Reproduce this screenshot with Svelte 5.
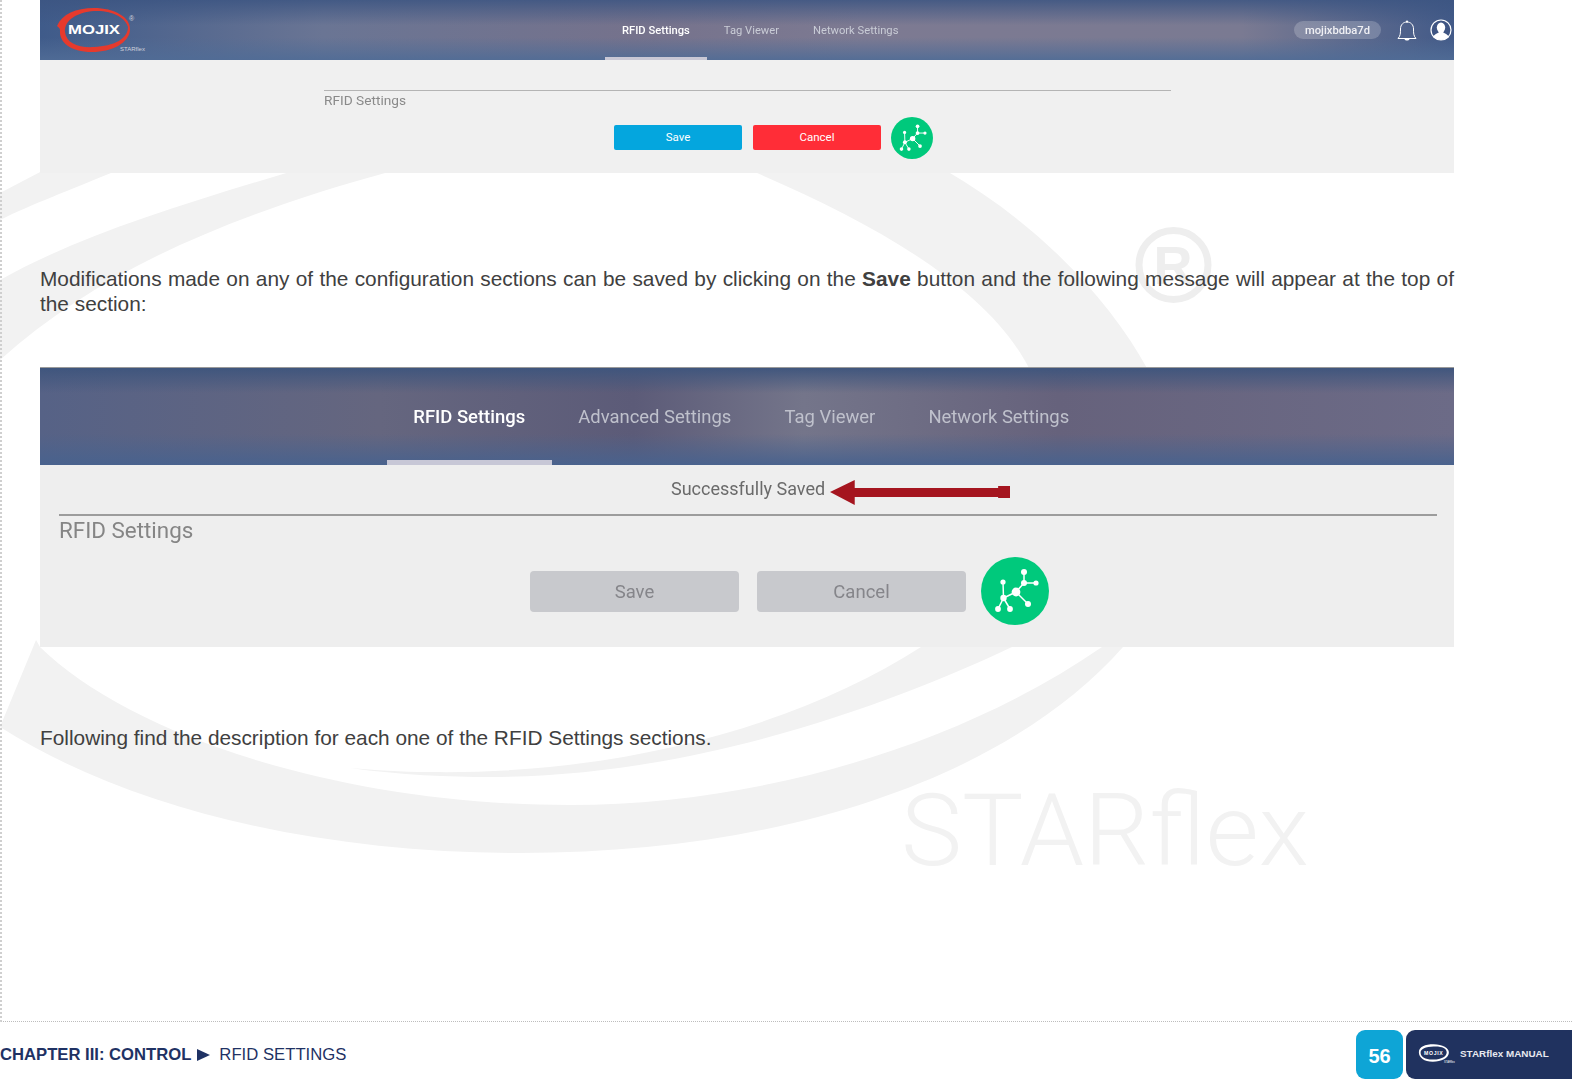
<script>
  const tabsA = ['RFID Settings', 'Tag Viewer', 'Network Settings'];
  const tabsB = ['RFID Settings', 'Advanced Settings', 'Tag Viewer', 'Network Settings'];
  const nodes = [[9,-8,3],[9,-19,3],[21,-8,2.6],[13,13,3],[-11.5,7,3.2],[-12,-9,2.6],[-17,18,2.9],[-5,18,2.9]];
  const edges = [[1,1,9,-8],[9,-8,9,-19],[9,-8,21,-8],[1,1,13,13],[1,1,-11.5,7],[-11.5,7,-12,-9],[-11.5,7,-17,18],[-11.5,7,-5,18]];
</script>

{#snippet graph(cls)}
  <svg class={cls} viewBox="-34 -34 68 68" aria-hidden="true">
    <circle r="34" fill="#00c97c" />
    {#each edges as e}
      <line x1={e[0]} y1={e[1]} x2={e[2]} y2={e[3]} stroke="#fff" stroke-width="1.5" />
    {/each}
    <circle cx="1" cy="1" r="4.4" fill="#fff" />
    {#each nodes as n}
      <circle cx={n[0]} cy={n[1]} r={n[2]} fill="#fff" />
    {/each}
  </svg>
{/snippet}

<div class="page">
  <svg class="mark" viewBox="0 0 1572 1079" aria-hidden="true">
    <path d="M0 193 L44 170 L118 170 C70 190 30 205 0 220Z" />
    <path d="M296 170 C180 205 80 235 0 280 L0 360 C100 270 230 215 396 170Z" />
    <path d="M750 170 C880 225 990 290 1030 370 L1148 370 C1110 300 1040 225 945 170Z" />
    <path d="M1123 647 C1010 775 790 853 520 853 C320 853 130 810 0 727 L36 640 L40 647 C130 735 340 805 570 805 C760 805 960 745 1102 647Z" />
    <path d="M921 647 C800 725 620 775 430 772 C400 772 375 770 350 768 C400 775 450 777 490 777 C700 777 900 700 1012 647Z" />
    <circle cx="1173.5" cy="265" r="34.5" class="ring" />
    <text x="1173" y="284" class="r" text-anchor="middle">R</text>
    <text x="901" y="865" class="star" textLength="408" lengthAdjust="spacingAndGlyphs">STARflex</text>
  </svg>

  <div class="sheet">
    <section class="fig-a">
      <header class="bar-a">
        <svg class="logo" viewBox="0 0 100 60" aria-hidden="true">
          <path fill-rule="evenodd" fill="#e63a2d" d="M1 26 C6 14 20 8 38 8 C58 8 75 17 74 30 C73 43 56 52 36 52 C14 52 3 42 4 30 C4 28 2 27 1 26Z M9 32 C10 43 22 48 38 47 C58 46 72 39 72 27 C70 18 56 10 38 11 C22 12 8 20 9 32Z" />
          <text x="12" y="34" class="lg" textLength="52" lengthAdjust="spacingAndGlyphs">MOJIX</text>
          <text x="73" y="21" class="reg">®</text>
          <text x="64" y="51" class="sf">STARflex</text>
        </svg>
        <nav class="nav-a">
          {#each tabsA as t, i}
            <span class="tab-a" class:on={i === 0}>{t}</span>
          {/each}
        </nav>
        <div class="tools">
          <span class="chip">mojixbdba7d</span>
          <svg class="bell" viewBox="0 0 20 21" aria-hidden="true">
            <path d="M1 18.5 C3.5 16 3.5 13 3.5 9 C3.5 4.5 6.5 2 10 2 C13.5 2 16.5 4.5 16.5 9 C16.5 13 16.5 16 19 18.5Z" fill="none" stroke="#fff" stroke-width="1" />
            <path d="M7.5 19 C8 21 12 21 12.5 19Z" fill="#fff" />
            <circle cx="10" cy="1.6" r="1.1" fill="#fff" />
          </svg>
          <svg class="avatar" viewBox="0 0 22 22" aria-hidden="true">
            <circle cx="11" cy="11" r="10" fill="#3f5583" stroke="#fff" stroke-width="1.2" />
            <ellipse cx="11" cy="8.6" rx="4.2" ry="5.2" fill="#fff" />
            <path d="M3 18 C5 14.5 8 14.5 9 13 L13 13 C14 14.5 17 14.5 19 18 C15 22 7 22 3 18Z" fill="#fff" />
          </svg>
        </div>
      </header>
      <div class="panel-a">
        <div class="title-a">RFID Settings</div>
        <div class="btns-a">
          <button class="btn-a save">Save</button>
          <button class="btn-a cancel">Cancel</button>
          {@render graph('graph-a')}
        </div>
      </div>
    </section>

    <p class="lead">Modifications made on any of the configuration sections can be saved by clicking on the <b>Save</b> button and the following message will appear at the top of the section:</p>

    <section class="fig-b">
      <header class="bar-b">
        <nav class="nav-b">
          {#each tabsB as t, i}
            <span class="tab-b" class:on={i === 0}>{t}</span>
          {/each}
        </nav>
      </header>
      <div class="panel-b">
        <div class="msg">
          Successfully Saved
          <svg class="arrow" viewBox="0 0 182 26" preserveAspectRatio="none" aria-hidden="true">
            <path d="M0 13 L25 1 L25 9 L170 9 L170 7 L182 7 L182 19 L170 19 L170 18 L25 18 L25 26Z" fill="#a5151f" />
          </svg>
        </div>
        <div class="title-b">RFID Settings</div>
        <div class="btns-b">
          <button class="btn-b">Save</button>
          <button class="btn-b">Cancel</button>
          {@render graph('graph-b')}
        </div>
      </div>
    </section>

    <p class="tail">Following find the description for each one of the RFID Settings sections.</p>
  </div>

  <footer class="foot">
    <div class="crumb"><b>CHAPTER III: CONTROL</b><i class="tri"></i><span>RFID SETTINGS</span></div>
    <div class="num">56</div>
    <div class="manual">
      <svg class="mini" viewBox="0 0 46 26" aria-hidden="true">
        <path fill-rule="evenodd" fill="#fff" d="M1 12 C1 6 8 3 18 3 C28 3 36 7 35.5 13 C35 19 27 23 17 23 C7 23 1 18 1 12Z M3 13 C3.5 18 9 21 18 20.5 C27 20 33 17 33 12 C33 7.5 27 5 18 5.5 C9 6 2.5 8 3 13Z" />
        <text x="7" y="15.5" class="mini-t">MOJIX</text>
        <text x="30" y="24" class="mini-s">STARflex</text>
      </svg>
      <span>STARflex MANUAL</span>
    </div>
  </footer>
</div>

<style>
  :global(body) { margin: 0; background: #fff; }
  .page {
    position: relative;
    width: 1572px;
    height: 1079px;
    overflow: hidden;
    font-family: "Liberation Sans", Arial, sans-serif;
  }
  .mark { position: absolute; left: 0; top: 0; width: 1572px; height: 1079px; fill: #f2f2f2; }
  .mark .ring { fill: none; stroke: #eeeeee; stroke-width: 7; }
  .mark .r { font: 700 54px "Liberation Sans", sans-serif; fill: #eeeeee; }
  .mark .star { font: 300 100px Roboto, sans-serif; fill: #f2f2f2; }

  .sheet {
    position: relative;
    box-sizing: border-box;
    height: 1022px;
    padding-left: 38px;
    border-left: 2px dotted #cfcfcf;
    border-bottom: 1px dotted #bdbdbd;
  }
  .fig-a, .fig-b { width: 1414px; font-family: Roboto, sans-serif; }

  .bar-a {
    height: 60px;
    display: flex;
    align-items: center;
    background:
      linear-gradient(180deg, rgba(60,85,130,.85) 0, rgba(90,90,120,0) 42%, rgba(90,100,140,0) 62%, rgba(80,108,150,.9) 100%),
      linear-gradient(90deg, #3f5b8a 0, #6a7594 20%, #75728c 42%, #7d7a92 58%, #7a7a92 85%, #425a88 100%);
  }
  .logo { width: 100px; height: 60px; margin-left: 16px; flex: none; }
  .lg { font: 700 12px "Liberation Sans", sans-serif; fill: #fff; }
  .reg { font: 400 7px "Liberation Sans", sans-serif; fill: #d5d7df; }
  .sf { font: 400 6px "Liberation Sans", sans-serif; fill: #cfd3dc; }
  .nav-a { display: flex; align-self: stretch; margin-left: 449px; }
  .tab-a {
    box-sizing: border-box;
    display: flex;
    align-items: center;
    height: 60px;
    padding: 3px 17px 0;
    font-size: 11.2px;
    color: #c9ccd6;
    border-bottom: 3px solid transparent;
    filter: blur(.25px);
  }
  .tab-a.on { color: #fff; font-weight: 500; border-bottom-color: #c9c8d5; }
  .tools { margin-left: auto; display: flex; align-items: center; padding-right: 2px; }
  .chip {
    box-sizing: border-box;
    width: 87px;
    height: 18px;
    border-radius: 9px;
    background: rgba(255,255,255,.2);
    color: #f0f0f4;
    font-size: 11.2px;
    font-weight: 500;
    line-height: 19px;
    text-align: center;
    filter: blur(.2px);
  }
  .bell { width: 20px; height: 21px; margin-left: 16px; }
  .avatar { width: 22px; height: 22px; margin-left: 13px; }

  .panel-a { height: 113px; background: #f0f0f0; padding-top: 30px; box-sizing: border-box; }
  .title-a {
    margin-left: 284px;
    width: 847px;
    border-top: 1px solid #b4b4b4;
    font-size: 13.7px;
    line-height: 19px;
    color: #8a8a8a;
    filter: blur(.2px);
  }
  .btns-a { display: flex; align-items: center; margin: 6px 0 0 574px; height: 42px; }
  .btn-a {
    width: 128px;
    height: 25px;
    border: 0;
    border-radius: 2px;
    padding: 0;
    color: #fff;
    font: 400 11.5px Roboto, sans-serif;
  }
  .save { background: #04a6de; }
  .cancel { background: #ff2d37; margin-left: 11px; }
  .graph-a { width: 42px; height: 42px; margin: 1px 0 0 10px; }

  .lead, .tail {
    margin: 0;
    width: 1414px;
    font-size: 20.83px;
    line-height: 25px;
    color: #404040;
  }
  .lead { margin-top: 93px; text-align: justify; }

  .fig-b { margin-top: 51px; }
  .bar-b {
    height: 98px;
    box-sizing: border-box;
    border-top: 1px solid #9a9a9a;
    display: flex;
    background:
      linear-gradient(180deg, rgba(62,85,125,.95) 0, rgba(80,85,115,0) 26%, rgba(80,85,115,0) 68%, rgba(72,98,142,.95) 100%),
      linear-gradient(90deg, #566286 0, #65667f 24%, #5c5b78 42%, #74758a 54%, #66627c 72%, #6c6b87 100%);
  }
  .nav-b { display: flex; margin-left: 347px; }
  .tab-b {
    box-sizing: border-box;
    display: flex;
    align-items: center;
    height: 97px;
    padding: 6px 26.8px 0 26.3px;
    font-size: 18.45px;
    color: #bfc1cc;
    border-bottom: 5px solid transparent;
    filter: blur(.35px);
  }
  .tab-b.on { color: #fff; font-weight: 500; border-bottom-color: #c7c7d6; }
  .panel-b { height: 182px; background: #eeeeee; box-sizing: border-box; }
  .msg {
    position: relative;
    width: 153px;
    margin-left: 631px;
    padding-top: 12px;
    height: 37px;
    box-sizing: border-box;
    font-size: 18px;
    line-height: 24px;
    color: #6a6a6a;
    white-space: nowrap;
    filter: blur(.3px);
  }
  .arrow { position: absolute; left: 159px; top: 14px; width: 180px; height: 26px; }
  .title-b {
    margin: 12px 17px 0 19px;
    border-top: 2px solid #9c9c9c;
    font-size: 22.4px;
    line-height: 29px;
    color: #858585;
    filter: blur(.35px);
  }
  .btns-b { display: flex; align-items: center; margin: 12px 0 0 490px; height: 68px; }
  .btn-b {
    width: 209px;
    height: 41px;
    border: 0;
    border-radius: 4px;
    padding: 1px 0 0;
    background: #c8c9cd;
    color: #85858a;
    font: 400 18.5px Roboto, sans-serif;
    filter: blur(.3px);
  }
  .btn-b + .btn-b { margin-left: 18px; }
  .graph-b { width: 68px; height: 68px; margin-left: 15px; }

  .tail { margin-top: 78px; }

  .foot { display: flex; height: 57px; align-items: flex-end; }
  .crumb {
    display: flex;
    align-items: center;
    height: 49px;
    margin-right: auto;
    color: #1f3264;
    font-size: 16.7px;
    box-sizing: border-box;
  }
  .crumb b { font-size: 16.65px; }
  .tri {
    width: 0;
    height: 0;
    margin: 0 9px 0 6px;
    border-left: 13px solid #1f3264;
    border-top: 6.5px solid transparent;
    border-bottom: 6.5px solid transparent;
  }
  .num {
    width: 47px;
    height: 49px;
    border-radius: 9px;
    background: #0ea5d6;
    color: #fff;
    font-size: 20px;
    font-weight: 700;
    line-height: 52px;
    text-align: center;
  }
  .manual {
    display: flex;
    align-items: center;
    box-sizing: border-box;
    width: 166px;
    height: 49px;
    margin-left: 3px;
    padding: 0 0 3px 12px;
    border-radius: 9px 0 0 9px;
    background: #20325f;
    color: #e8eaf0;
    font-size: 9.9px;
    font-weight: 700;
    white-space: nowrap;
  }
  .mini { width: 40px; height: 24px; flex: none; margin-right: 2px; }
  .mini-t { font: 700 6px "Liberation Sans", sans-serif; fill: #fff; letter-spacing: .7px; }
  .mini-s { font: 400 3px "Liberation Sans", sans-serif; fill: #fff; }
</style>
